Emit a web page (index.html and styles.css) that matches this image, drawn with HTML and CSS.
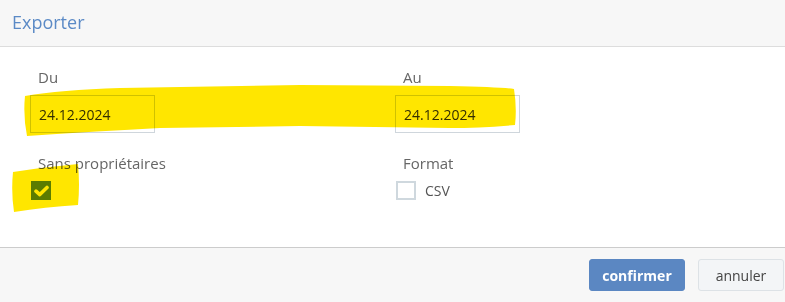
FILE: index.html
```html
<!DOCTYPE html>
<html lang="fr">
<head>
    <meta charset="UTF-8">
    <meta name="viewport" content="width=device-width, initial-scale=1.0">
    <title>Exporter</title>
    <link rel="stylesheet" href="styles.css">
</head>
<body>
    <div class="modal">
        <div class="modal-header">
            <h4 class="modal-title">Exporter</h4>
        </div>

        <div class="modal-body">
            <div class="row">
                <div class="field">
                    <label class="field-label">Du</label>
                    <input class="date-input" type="text" value="24.12.2024">
                </div>
                <div class="field">
                    <label class="field-label">Au</label>
                    <input class="date-input" type="text" value="24.12.2024">
                </div>
            </div>

            <div class="row">
                <div class="field">
                    <label class="field-label">Sans propriétaires</label>
                    <div class="check-line">
                        <span class="check-box checked">
                            <svg width="15" height="12" viewBox="0 0 15 12">
                                <path d="M2 6.2 L5.8 9.6 L13 2.4" fill="none" stroke="#fff" stroke-width="3.6" stroke-linecap="round" stroke-linejoin="round"/>
                            </svg>
                        </span>
                    </div>
                </div>
                <div class="field">
                    <label class="field-label">Format</label>
                    <div class="check-line">
                        <span class="check-box"></span>
                        <span class="check-text">CSV</span>
                    </div>
                </div>
            </div>
        </div>

        <div class="modal-footer">
            <button class="btn btn-primary">confirmer</button>
            <button class="btn btn-default">annuler</button>
        </div>

        <!-- highlighter strokes drawn over the dialog -->
        <svg class="marker" width="785" height="302" viewBox="0 0 785 302">
            <path d="M25 96 Q60 90 120 88 L300 85 L450 86 Q500 87 514 89 Q517 108 515 125 Q480 128 450 128 L300 126 L160 128 Q100 131 27 136 Q23 116 25 96 Z" fill="#ffe600"/>
            <path d="M13 172 Q45 167 78 164 Q80 185 78 205 Q45 207 14 212 Q11 192 13 172 Z" fill="#ffe600"/>
        </svg>
    </div>
</body>
</html>
```

FILE: styles.css
```css
* {
    box-sizing: border-box;
}
body {
    margin: 0;
    font-family: "Open Sans", Arial, sans-serif;
    color: #555;
    background-color: #fff;
}
.modal {
    position: relative;
    width: 785px;
    height: 302px;
    overflow: hidden;
}
.modal-header {
    height: 47px;
    background-color: #f7f7f7;
    border-bottom: 1px solid #dddddd;
    padding: 0 12px;
    display: flex;
    align-items: center;
}
.modal-title {
    margin: 0 0 2px 0;
    font-size: 18px;
    font-weight: normal;
    color: #5b8ac6;
}
.modal-body {
    height: 200px;
    padding: 20px 30px 0 30px;
}
.row {
    display: grid;
    grid-template-columns: 365px 365px;
    margin-bottom: 20px;
}
.field-label {
    display: block;
    padding-left: 8px;
    font-size: 15px;
    line-height: 20px;
    color: #666;
    margin-bottom: 8px;
}
.date-input {
    width: 125px;
    height: 38px;
    border: 1px solid #cfd6dc;
    padding: 0 8px;
    font-family: "Open Sans", Arial, sans-serif;
    font-size: 14px;
    color: #333;
    background-color: #fff;
    outline: none;
}
.check-line {
    display: flex;
    align-items: center;
    gap: 9px;
    margin-top: 4px;
}
.check-box {
    width: 20px;
    height: 19px;
    margin-left: 1px;
    border: 2px solid #cfd8de;
    background-color: #fff;
    display: flex;
    align-items: center;
    justify-content: center;
}
.check-box.checked {
    background-color: #5b8ac6;
    border-color: #5b8ac6;
}
.check-text {
    font-size: 14px;
    color: #555;
}
.modal-footer {
    height: 55px;
    background-color: #f7f7f7;
    border-top: 1px solid #cccccc;
    padding: 11px 1px 0 0;
    display: flex;
    justify-content: flex-end;
    gap: 13px;
}
.btn {
    height: 32px;
    border-radius: 3px;
    font-family: "Open Sans", Arial, sans-serif;
    font-size: 14px;
    padding: 0 12px;
    cursor: pointer;
}
.btn-primary {
    width: 96px;
    background-color: #5b87c2;
    border: 1px solid #5b87c2;
    color: #fff;
    font-weight: bold;
}
.btn-default {
    width: 86px;
    background-color: #f3f5f7;
    border: 1px solid #dde2e6;
    color: #444;
}
.marker {
    position: absolute;
    top: 0;
    left: 0;
    mix-blend-mode: multiply;
    pointer-events: none;
}
```
